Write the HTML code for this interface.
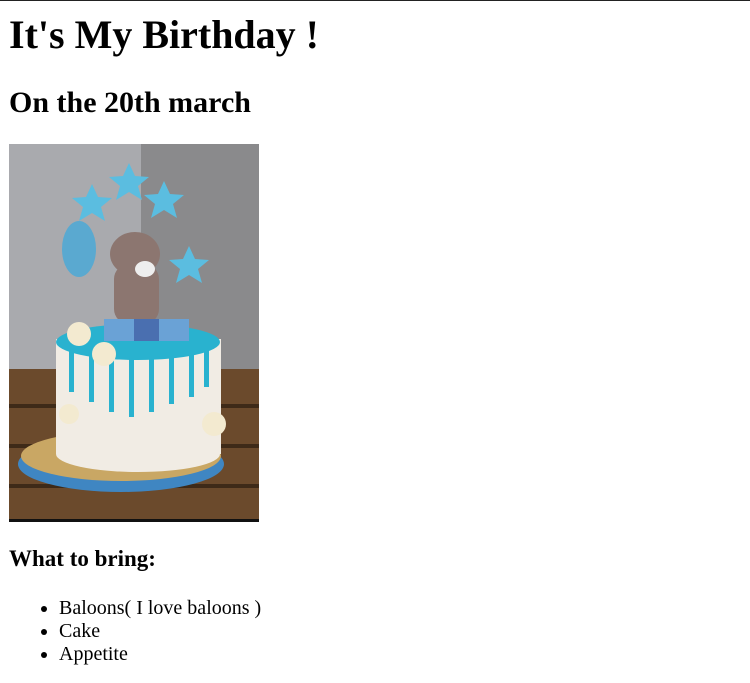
<!DOCTYPE html>
<html><head><style>
body{margin:0;width:750px;height:683px;overflow:hidden;background:#fff;font-family:"Liberation Serif",serif;color:#000;position:relative}
.t{position:absolute;left:9px;white-space:nowrap;font-weight:bold;margin:0}
ul{position:absolute;left:0;top:597px;margin:0;padding-left:59px;font-size:20px;line-height:23px}
</style></head><body>
<div style="position:absolute;left:0;top:0;width:750px;height:1px;background:#222"></div>
<div class="t" style="top:12px;font-size:40px;line-height:46px">It's My Birthday !</div>
<div class="t" style="top:86px;font-size:30px;line-height:34px">On the 20th march</div>
<svg style="position:absolute;left:9px;top:144px" width="250" height="378" viewBox="0 0 250 378">
<rect width="250" height="378" fill="#8a8a8c"/>
<rect width="132" height="240" fill="#a9aaae"/>
<rect y="225" width="250" height="153" fill="#6b4a2c"/>
<rect y="260" width="250" height="4" fill="#3e2a18"/>
<rect y="300" width="250" height="4" fill="#3e2a18"/>
<rect y="340" width="250" height="4" fill="#3e2a18"/>
<ellipse cx="112" cy="320" rx="103" ry="28" fill="#3f86c2"/>
<ellipse cx="112" cy="312" rx="100" ry="25" fill="#c9a764"/>
<rect x="47" y="195" width="165" height="115" fill="#f1ece4"/>
<ellipse cx="129" cy="310" rx="82" ry="18" fill="#f1ece4"/>
<ellipse cx="129" cy="198" rx="82" ry="18" fill="#29b2cf"/>
<g fill="#29b2cf"><rect x="60" y="198" width="5" height="50"/><rect x="80" y="198" width="5" height="60"/><rect x="100" y="198" width="5" height="70"/><rect x="120" y="198" width="5" height="75"/><rect x="140" y="198" width="5" height="70"/><rect x="160" y="198" width="5" height="62"/><rect x="180" y="198" width="5" height="55"/><rect x="195" y="198" width="5" height="45"/></g>
<ellipse cx="126" cy="110" rx="25" ry="22" fill="#8c7670"/>
<rect x="105" y="120" width="45" height="60" rx="15" fill="#8c7670"/>
<ellipse cx="136" cy="125" rx="10" ry="8" fill="#eee"/>
<g fill="#6aa2d6"><rect x="95" y="175" width="30" height="22"/><rect x="150" y="175" width="30" height="22"/></g>
<g fill="#4a6fb0"><rect x="125" y="175" width="25" height="22"/></g>
<ellipse cx="70" cy="105" rx="17" ry="28" fill="#5aa9d0"/>
<g fill="#5bbde0"><polygon points="120,19 126,32 140,33 129,42 133,56 120,48 107,56 111,42 100,33 114,32"/><polygon points="83,40 89,53 103,54 92,63 96,77 83,69 70,77 74,63 63,54 77,53"/><polygon points="155,37 161,50 175,51 164,60 168,74 155,66 142,74 146,60 135,51 149,50"/><polygon points="180,102 186,115 200,116 189,125 193,139 180,131 167,139 171,125 160,116 174,115"/></g>
<g fill="#f3ead0"><circle cx="95" cy="210" r="12"/><circle cx="70" cy="190" r="12"/><circle cx="205" cy="280" r="12"/><circle cx="60" cy="270" r="10"/></g>
<rect y="375" width="250" height="3" fill="#111"/>
</svg>
<div class="t" style="top:545px;font-size:23px;line-height:28px">What to bring:</div>
<ul><li>Baloons( I love baloons )</li><li>Cake</li><li>Appetite</li></ul>
</body></html>
